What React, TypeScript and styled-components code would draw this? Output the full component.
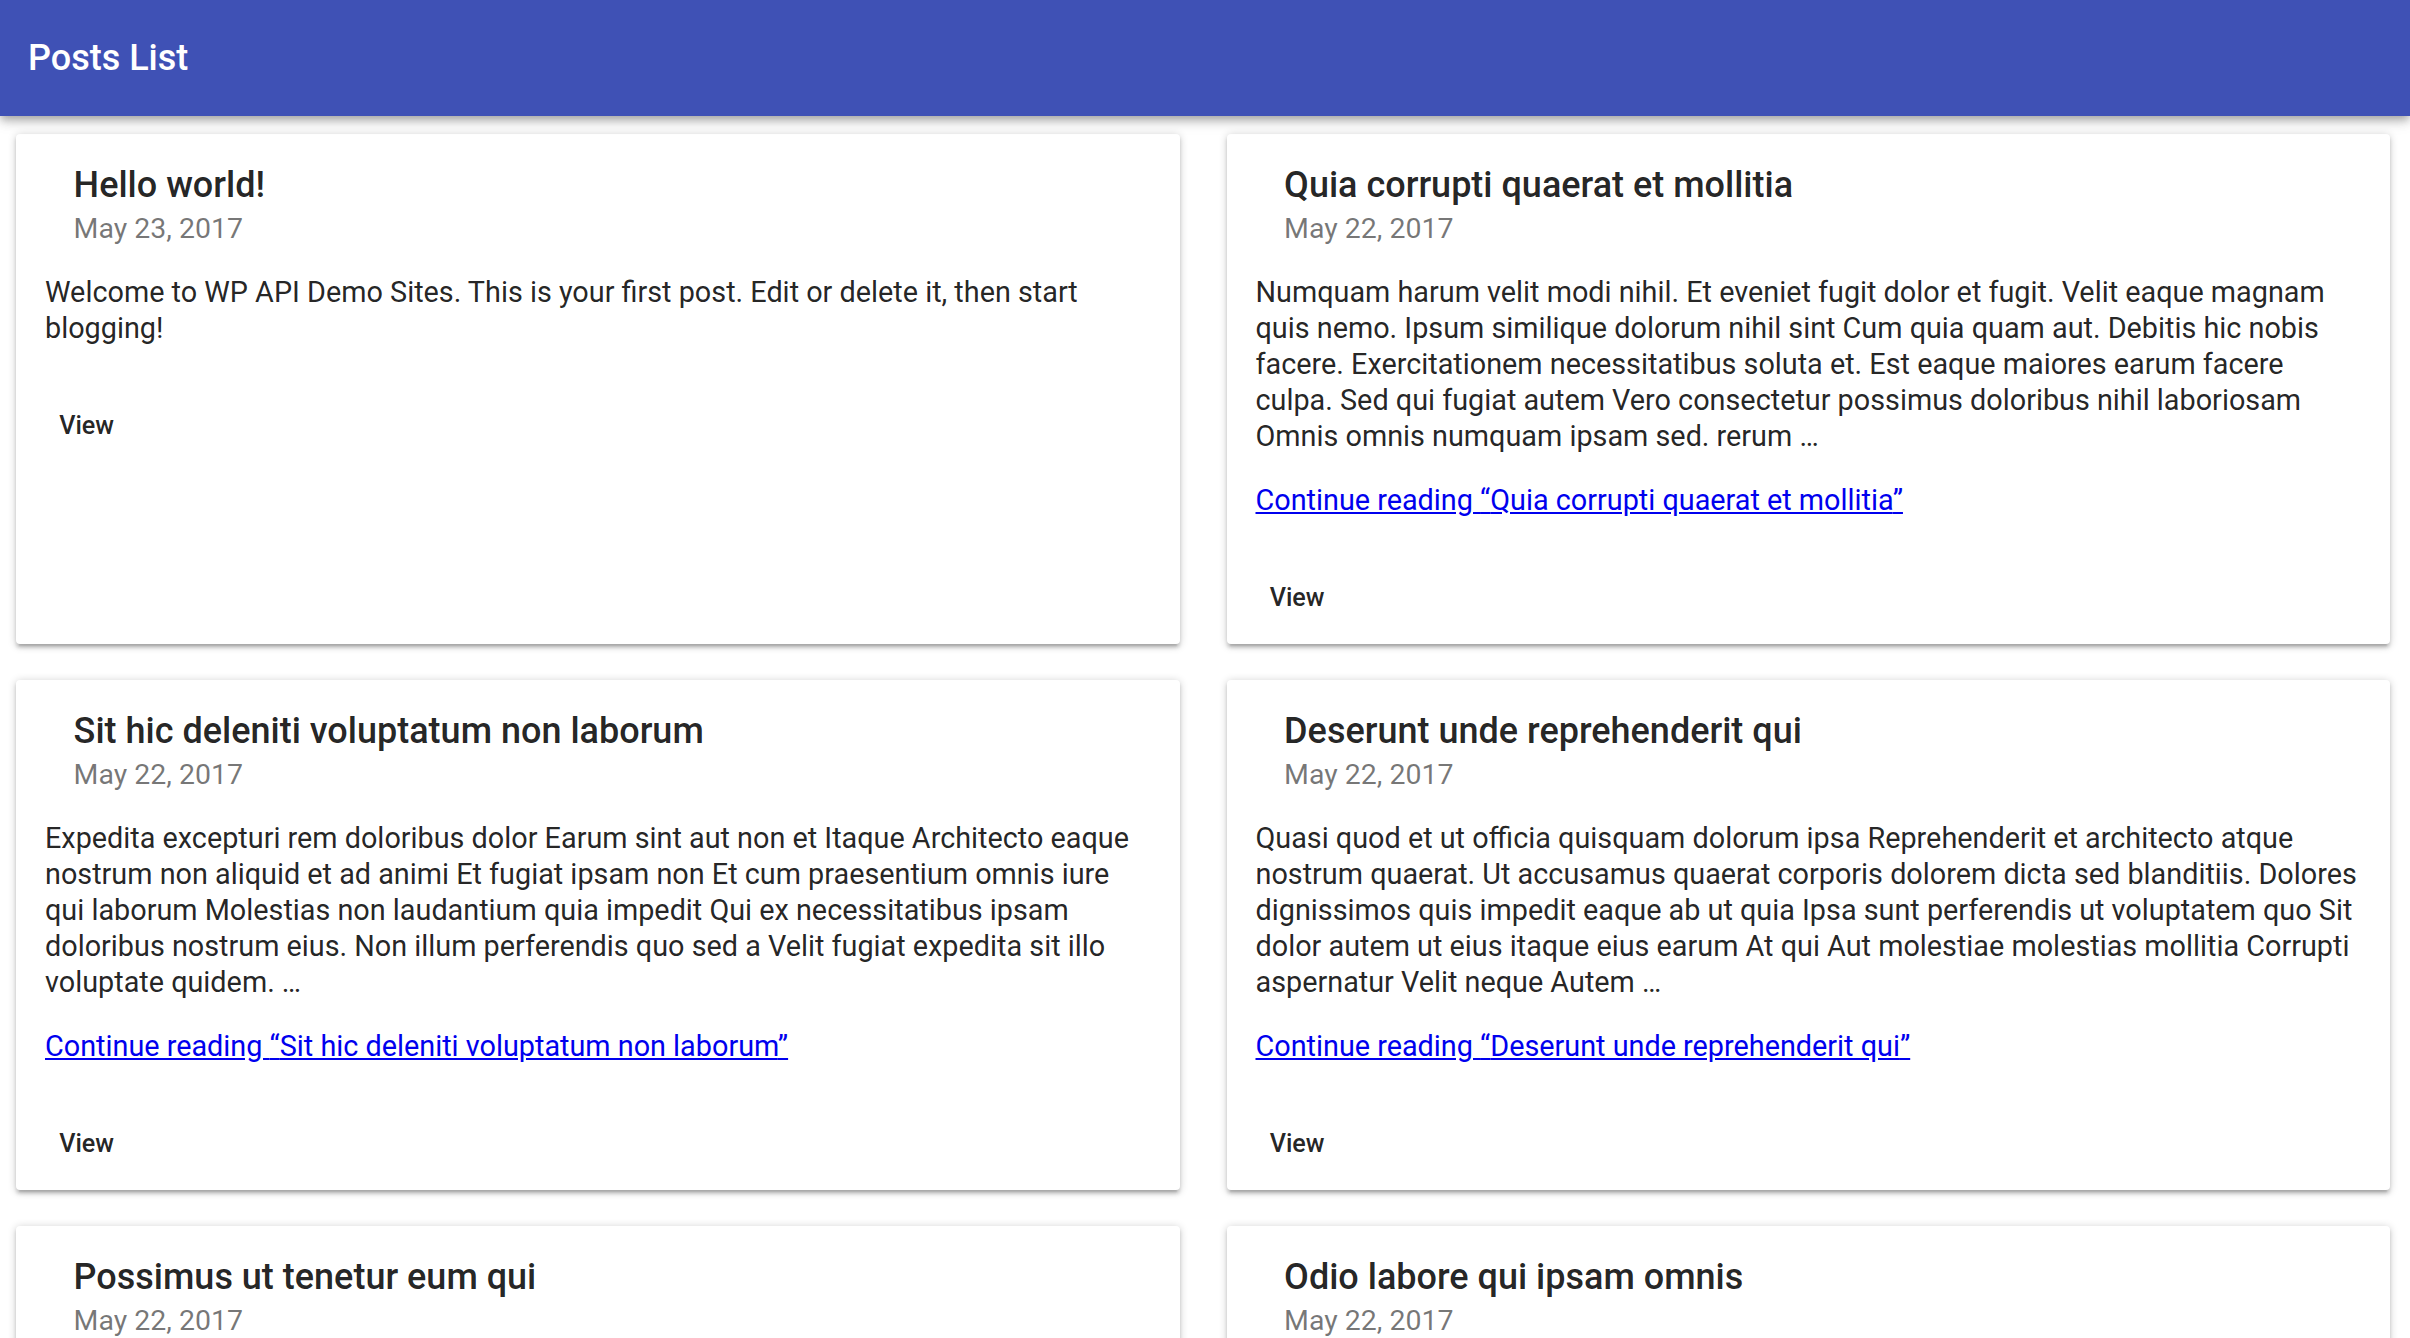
import React from "react";
import styled, { createGlobalStyle } from "styled-components";

const GlobalStyle = createGlobalStyle`
  html, body {
    margin: 0;
    padding: 0;
    background: #ffffff;
    font-family: Roboto, "Liberation Sans", Arial, sans-serif;
    -webkit-font-smoothing: antialiased;
  }
  * { box-sizing: border-box; }
`;

const AppBar = styled.header`
  height: 116px;
  background: #3f51b5;
  display: flex;
  align-items: center;
  padding: 0 28px;
  box-shadow: 0 3.6px 7.2px -1.8px rgba(0, 0, 0, 0.2), 0 7.2px 9px 0 rgba(0, 0, 0, 0.14),
    0 1.8px 18px 0 rgba(0, 0, 0, 0.12);
  position: relative;
  z-index: 1;
`;

const AppTitle = styled.h1`
  margin: 0;
  color: #ffffff;
  font-size: 36px;
  font-weight: 500;
  line-height: 44px;
`;

const Grid = styled.main`
  display: grid;
  grid-template-columns: 1fr 1fr;
  column-gap: 47px;
  row-gap: 36px;
  padding: 18px 20px 40px 16px;
`;

const Card = styled.article`
  background: #ffffff;
  border-radius: 4px;
  display: flex;
  flex-direction: column;
  box-shadow: 0 1.8px 9px 0 rgba(0, 0, 0, 0.2), 0 3.6px 3.6px 0 rgba(0, 0, 0, 0.14),
    0 5.4px 1.8px -3.6px rgba(0, 0, 0, 0.12);
`;

const Content = styled.div`
  padding: 28.5px 29px 0 29px;
`;

const Header = styled.div`
  padding: 0 28.6px;
`;

const Title = styled.h2`
  margin: 0;
  font-size: 36px;
  font-weight: 500;
  line-height: 44px;
  color: rgba(0, 0, 0, 0.87);
`;

const DateLine = styled.div`
  font-size: 28.5px;
  line-height: 43px;
  color: rgba(0, 0, 0, 0.54);
`;

const Body = styled.div`
  margin-top: 24.5px;
  display: flex;
  flex-direction: column;
  gap: 28px;
`;

const Para = styled.p`
  margin: 0;
  font-size: 28.8px;
  line-height: 36px;
  color: rgba(0, 0, 0, 0.87);
`;

const MoreLink = styled.a`
  color: #0000ee;
  text-decoration: underline;
`;

const Actions = styled.div`
  padding: 14.4px;
  margin-top: 32.5px;
  display: flex;
`;

const ViewButton = styled.button`
  height: 64.8px;
  padding: 0 28.8px;
  border: none;
  background: transparent;
  font-family: inherit;
  font-size: 25.2px;
  font-weight: 500;
  color: rgba(0, 0, 0, 0.87);
  border-radius: 3.6px;
  cursor: pointer;
`;

type Post = {
  title: string;
  date: string;
  excerpt: string;
  more?: boolean;
};

const posts: Post[] = [
  {
    title: "Hello world!",
    date: "May 23, 2017",
    excerpt:
      "Welcome to WP API Demo Sites. This is your first post. Edit or delete it, then start blogging!",
  },
  {
    title: "Quia corrupti quaerat et mollitia",
    date: "May 22, 2017",
    excerpt:
      "Numquam harum velit modi nihil. Et eveniet fugit dolor et fugit. Velit eaque magnam quis nemo. Ipsum similique dolorum nihil sint Cum quia quam aut. Debitis hic nobis facere. Exercitationem necessitatibus soluta et. Est eaque maiores earum facere culpa. Sed qui fugiat autem Vero consectetur possimus doloribus nihil laboriosam Omnis omnis numquam ipsam sed. rerum \u2026",
    more: true,
  },
  {
    title: "Sit hic deleniti voluptatum non laborum",
    date: "May 22, 2017",
    excerpt:
      "Expedita excepturi rem doloribus dolor Earum sint aut non et Itaque Architecto eaque nostrum non aliquid et ad animi Et fugiat ipsam non Et cum praesentium omnis iure qui laborum Molestias non laudantium quia impedit Qui ex necessitatibus ipsam doloribus nostrum eius. Non illum perferendis quo sed a Velit fugiat expedita sit illo voluptate quidem. \u2026",
    more: true,
  },
  {
    title: "Deserunt unde reprehenderit qui",
    date: "May 22, 2017",
    excerpt:
      "Quasi quod et ut officia quisquam dolorum ipsa Reprehenderit et architecto atque nostrum quaerat. Ut accusamus quaerat corporis dolorem dicta sed blanditiis. Dolores dignissimos quis impedit eaque ab ut quia Ipsa sunt perferendis ut voluptatem quo Sit dolor autem ut eius itaque eius earum At qui Aut molestiae molestias mollitia Corrupti aspernatur Velit neque Autem \u2026",
    more: true,
  },
  {
    title: "Possimus ut tenetur eum qui",
    date: "May 22, 2017",
    excerpt:
      "Dolorem et vel aut quia voluptas sit Eos quia sint et illum ut Vero molestiae error sed Corporis ipsum voluptatem quo aut natus Est fugiat iusto rerum Eligendi laudantium est qui dolores in. Sunt odio ipsam aut voluptatem fugiat \u2026",
    more: true,
  },
  {
    title: "Odio labore qui ipsam omnis",
    date: "May 22, 2017",
    excerpt:
      "Nam quia accusamus neque nihil aut Rerum illum ut et enim dolor est Quo natus omnis quis sapiente aut Ut et quam non dolore est et Tempore fugit nihil ab aliquam et. Voluptas ut perspiciatis illum \u2026",
    more: true,
  },
];

function PostCard({ post }: { post: Post }) {
  return (
    <Card>
      <Content>
        <Header>
          <Title>{post.title}</Title>
          <DateLine>{post.date}</DateLine>
        </Header>
        <Body>
          <Para>{post.excerpt}</Para>
          {post.more && (
            <Para>
              <MoreLink href="#">
                Continue reading {"\u201C"}
                {post.title}
                {"\u201D"}
              </MoreLink>
            </Para>
          )}
        </Body>
      </Content>
      <Actions>
        <ViewButton type="button">View</ViewButton>
      </Actions>
    </Card>
  );
}

export default function App() {
  return (
    <>
      <GlobalStyle />
      <AppBar>
        <AppTitle>Posts List</AppTitle>
      </AppBar>
      <Grid>
        {posts.map((p) => (
          <PostCard key={p.title} post={p} />
        ))}
      </Grid>
    </>
  );
}
